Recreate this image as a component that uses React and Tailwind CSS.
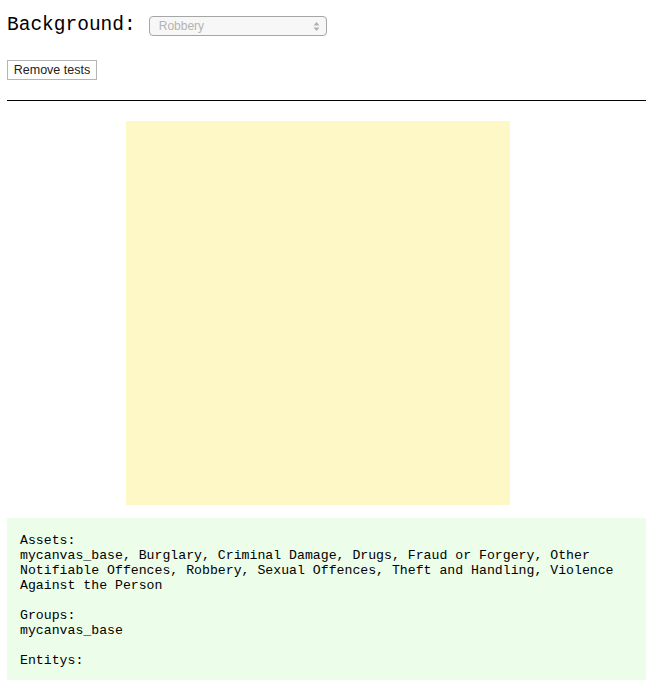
export default function App() {
  return (
    <div className="min-h-[688px] bg-white px-[7px] text-black">
      <div className="flex h-[51px] items-center pt-[1px]">
        <span className="font-['Liberation_Mono',monospace] text-[19.5px] leading-none">Background:</span>
        <div className="ml-[13px] flex h-[20px] w-[178px] items-center justify-between rounded-[4px] border border-[#a6a6a6] bg-[#f7f7f7] pl-[9px] pr-[6px]">
          <span className="font-['Liberation_Sans',sans-serif] text-[12px] text-[#b3b3b3]">Robbery</span>
          <svg width="7" height="11" viewBox="0 0 7 11">
            <path d="M3.5 1 L6.5 4.5 L0.5 4.5 Z" fill="#b0b0b0" />
            <path d="M3.5 10 L6.5 6.5 L0.5 6.5 Z" fill="#b0b0b0" />
          </svg>
        </div>
      </div>
      <div className="mt-[9px]">
        <button className="flex h-[20px] w-[90px] items-center justify-center border border-[#b5b5b5] bg-white font-['Liberation_Sans',sans-serif] text-[12.5px] text-[#222]">Remove tests</button>
      </div>
      <div className="mt-[20px] h-px bg-black" />
      <div className="mt-[20px] flex justify-center">
        <div className="ml-[-18px] h-[384px] w-[384px] bg-[#fef8c6]" />
      </div>
      <div className="mt-[13px] bg-[#ecfdea] px-[13px] pb-[12px] pt-[15px] font-['Liberation_Mono',monospace] text-[13.2px] leading-[15px] whitespace-pre-wrap">
        {"Assets:\nmycanvas_base, Burglary, Criminal Damage, Drugs, Fraud or Forgery, Other\nNotifiable Offences, Robbery, Sexual Offences, Theft and Handling, Violence\nAgainst the Person\n\nGroups:\nmycanvas_base\n\nEntitys:"}
      </div>
    </div>
  );
}
